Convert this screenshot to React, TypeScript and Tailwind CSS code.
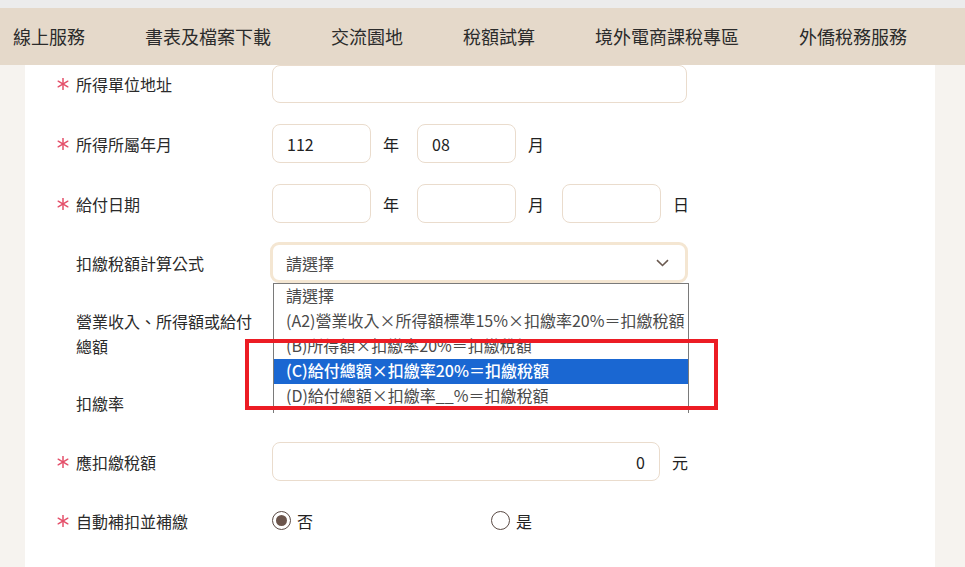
import React from 'react'

const navItems = ['線上服務', '書表及檔案下載', '交流園地', '稅額試算', '境外電商課稅專區', '外僑稅務服務']

const options = [
  '請選擇',
  '(A2)營業收入×所得額標準15%×扣繳率20%＝扣繳稅額',
  '(B)所得額×扣繳率20%＝扣繳稅額',
  '(C)給付總額×扣繳率20%＝扣繳稅額',
  '(D)給付總額×扣繳率__%＝扣繳稅額',
]

function Star() {
  return (
    <svg width="12" height="12" viewBox="0 0 12 12" className="shrink-0">
      <g stroke="#e4506a" strokeWidth="1.5" strokeLinecap="round">
        <line x1="6" y1="0.5" x2="6" y2="11.5" />
        <line x1="1.2" y1="3.2" x2="10.8" y2="8.8" />
        <line x1="1.2" y1="8.8" x2="10.8" y2="3.2" />
      </g>
    </svg>
  )
}

function Label({ text, required }: { text: string; required?: boolean }) {
  return (
    <div className="w-[215px] flex items-center shrink-0">
      <div className="w-[19px] flex items-center">{required && <Star />}</div>
      <span className="text-[16px] text-[#2a2a2a]">{text}</span>
    </div>
  )
}

function Box({ w, value, right }: { w: string; value?: string; right?: boolean }) {
  return (
    <div
      className={`${w} h-[39px] border border-[#eadccd] rounded-[8px] bg-white flex items-center px-[14px] text-[16px] text-[#222] ${
        right ? 'justify-end' : ''
      }`}
    >
      {value}
    </div>
  )
}

function Radio({ checked }: { checked?: boolean }) {
  return (
    <span className="w-[19px] h-[19px] rounded-full border-[1.5px] border-[#5a4a44] flex items-center justify-center shrink-0">
      {checked && <span className="w-[11px] h-[11px] rounded-full bg-[#6b554c]" />}
    </span>
  )
}

export default function App() {
  return (
    <div className="w-[965px] h-[567px] overflow-hidden bg-[#f6f3ef] font-['Noto_Sans_CJK_TC','Noto_Sans_CJK_SC',sans-serif]">
      <div className="h-[8px] bg-[#ececec]" />
      <nav className="h-[57px] bg-[#e5d9ca] flex items-center pl-[13px] gap-[60px] text-[18px] text-[#2b2b2b] whitespace-nowrap">
        {navItems.map((n) => (
          <span key={n}>{n}</span>
        ))}
      </nav>

      <div className="flex">
        <div className="w-[25px] shrink-0" />
        <div className="w-[910px] h-[502px] bg-white relative pl-[32px]">
          {/* 所得單位地址 */}
          <div className="flex items-center h-[38px]">
            <Label text="所得單位地址" required />
            <div className="w-[415px] h-[38px] border border-[#eadccd] rounded-[8px]" />
          </div>

          {/* 所得所屬年月 */}
          <div className="flex items-center mt-[21px]">
            <Label text="所得所屬年月" required />
            <Box w="w-[99px]" value="112" />
            <span className="ml-[12px] mr-[18px] text-[16px] text-[#222]">年</span>
            <Box w="w-[99px]" value="08" />
            <span className="ml-[12px] text-[16px] text-[#222]">月</span>
          </div>

          {/* 給付日期 */}
          <div className="flex items-center mt-[21px]">
            <Label text="給付日期" required />
            <Box w="w-[99px]" />
            <span className="ml-[12px] mr-[18px] text-[16px] text-[#222]">年</span>
            <Box w="w-[99px]" />
            <span className="ml-[12px] mr-[18px] text-[16px] text-[#222]">月</span>
            <Box w="w-[99px]" />
            <span className="ml-[12px] text-[16px] text-[#222]">日</span>
          </div>

          {/* 扣繳稅額計算公式 */}
          <div className="flex items-center mt-[19px]">
            <Label text="扣繳稅額計算公式" />
            <div className="-ml-[2px] w-[418px] h-[41px] border-[3px] border-[#f4e6d2] rounded-[9px] flex items-center justify-between pl-[13px] pr-[16px] text-[16px] text-[#4a4a4a]">
              <span>請選擇</span>
              <svg width="13" height="8" viewBox="0 0 13 8">
                <path d="M1 1.2 L6.5 6.5 L12 1.2" fill="none" stroke="#6b5a50" strokeWidth="1.6" />
              </svg>
            </div>
          </div>

          {/* 營業收入 */}
          <div className="flex items-start mt-[19px] h-[59px]">
            <div className="w-[215px] flex shrink-0 pt-[7px]">
              <div className="w-[19px]" />
              <span className="w-[180px] text-[16px] leading-[25px] text-[#2a2a2a]">營業收入、所得額或給付總額</span>
            </div>
          </div>

          {/* 扣繳率 */}
          <div className="flex items-center mt-[22px] h-[39px]">
            <Label text="扣繳率" />
          </div>

          {/* 應扣繳稅額 */}
          <div className="flex items-center mt-[20px]">
            <Label text="應扣繳稅額" required />
            <Box w="w-[388px]" value="0" right />
            <span className="ml-[12px] text-[16px] text-[#222]">元</span>
          </div>

          {/* 自動補扣並補繳 */}
          <div className="flex items-center mt-[20px] h-[39px]">
            <Label text="自動補扣並補繳" required />
            <div className="w-[219px] flex items-center gap-[6px] text-[16px] text-[#222]">
              <Radio checked />
              <span>否</span>
            </div>
            <div className="flex items-center gap-[6px] text-[16px] text-[#222]">
              <Radio />
              <span>是</span>
            </div>
          </div>

          {/* open select list */}
          <div className="absolute left-[248px] top-[218px] w-[416px] h-[130px] border border-[#7a7a7a] border-b-0 bg-white overflow-hidden">
            {options.map((o, i) => (
              <div
                key={o}
                className={`h-[25px] flex items-center pl-[12px] pb-[3px] text-[16px] whitespace-nowrap ${
                  i === 3 ? 'bg-[#1a67d2] text-white font-medium' : 'text-[#4a4a4a]'
                }`}
              >
                {o}
              </div>
            ))}
          </div>

          {/* annotation box */}
          <div className="absolute left-[220px] top-[274px] w-[473px] h-[71px] border-[4px] border-[#ec1c24]" />
        </div>
        <div className="flex-1" />
      </div>
    </div>
  )
}
